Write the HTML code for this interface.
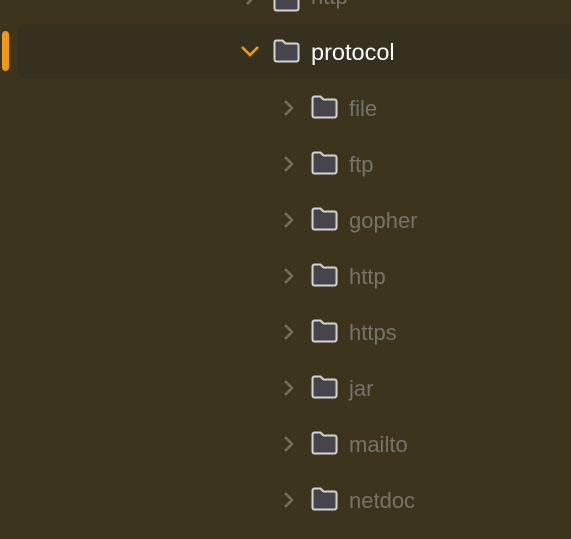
<!DOCTYPE html>
<html><head><style>
body{margin:0;width:571px;height:539px;background:#3d341e;overflow:hidden;position:relative;font-family:"Liberation Sans",sans-serif}
.hl{position:absolute;left:18px;top:24px;width:580px;height:55px;background:#36301f;border-radius:8px}
.bar{position:absolute;left:2px;top:31px;width:7px;height:40px;background:#f29a0e;border-radius:4px}
.row{position:absolute;height:56px;display:flex;align-items:center}
.row svg{position:absolute}
.t{position:absolute;font-size:22px;color:#76736a;white-space:nowrap}
</style></head><body>
<div class="hl"></div><div class="bar"></div>
<div id="c"></div>
<script>
function folder(x,y){return `<svg style="left:${x}px;top:${y}px" width="30" height="26" viewBox="0 0 30 26"><path d="M2.5 4.5a2 2 0 0 1 2-2h6l3 3h11a2 2 0 0 1 2 2v14a2 2 0 0 1-2 2h-20a2 2 0 0 1-2-2z" fill="#46454b" stroke="#d4d4d4" stroke-width="2" stroke-linejoin="round"/></svg>`}
function chevR(x,y,c){return `<svg style="left:${x}px;top:${y}px" width="14" height="18"><path d="M3 2l7 7-7 7" fill="none" stroke="${c}" stroke-width="2.4"/></svg>`}
let h='';
h+=`<div class="row" style="left:0;top:-32px;width:571px">${chevR(244,20,'#77735f')}${folder(272,19)}<span class="t" style="left:311px;top:16px">http</span></div>`;
h+=`<div class="row" style="left:0;top:24px;width:571px"><svg style="left:240px;top:20px" width="20" height="14"><path d="M2 3l8 8 8-8" fill="none" stroke="#f29a0e" stroke-width="2.6"/></svg>${folder(272,14)}<span class="t" style="left:311px;top:15px;color:#fff;font-size:23.5px">protocol</span></div>`;
const items=['file','ftp','gopher','http','https','jar','mailto','netdoc'];
items.forEach((n,i)=>{const top=80+i*56;
h+=`<div class="row" style="left:0;top:${top}px;width:571px">${chevR(282,19,'#77735f')}${folder(310,14)}<span class="t" style="left:349px;top:16px">${n}</span></div>`;});
document.getElementById('c').innerHTML=h;
</script>
</body></html>
